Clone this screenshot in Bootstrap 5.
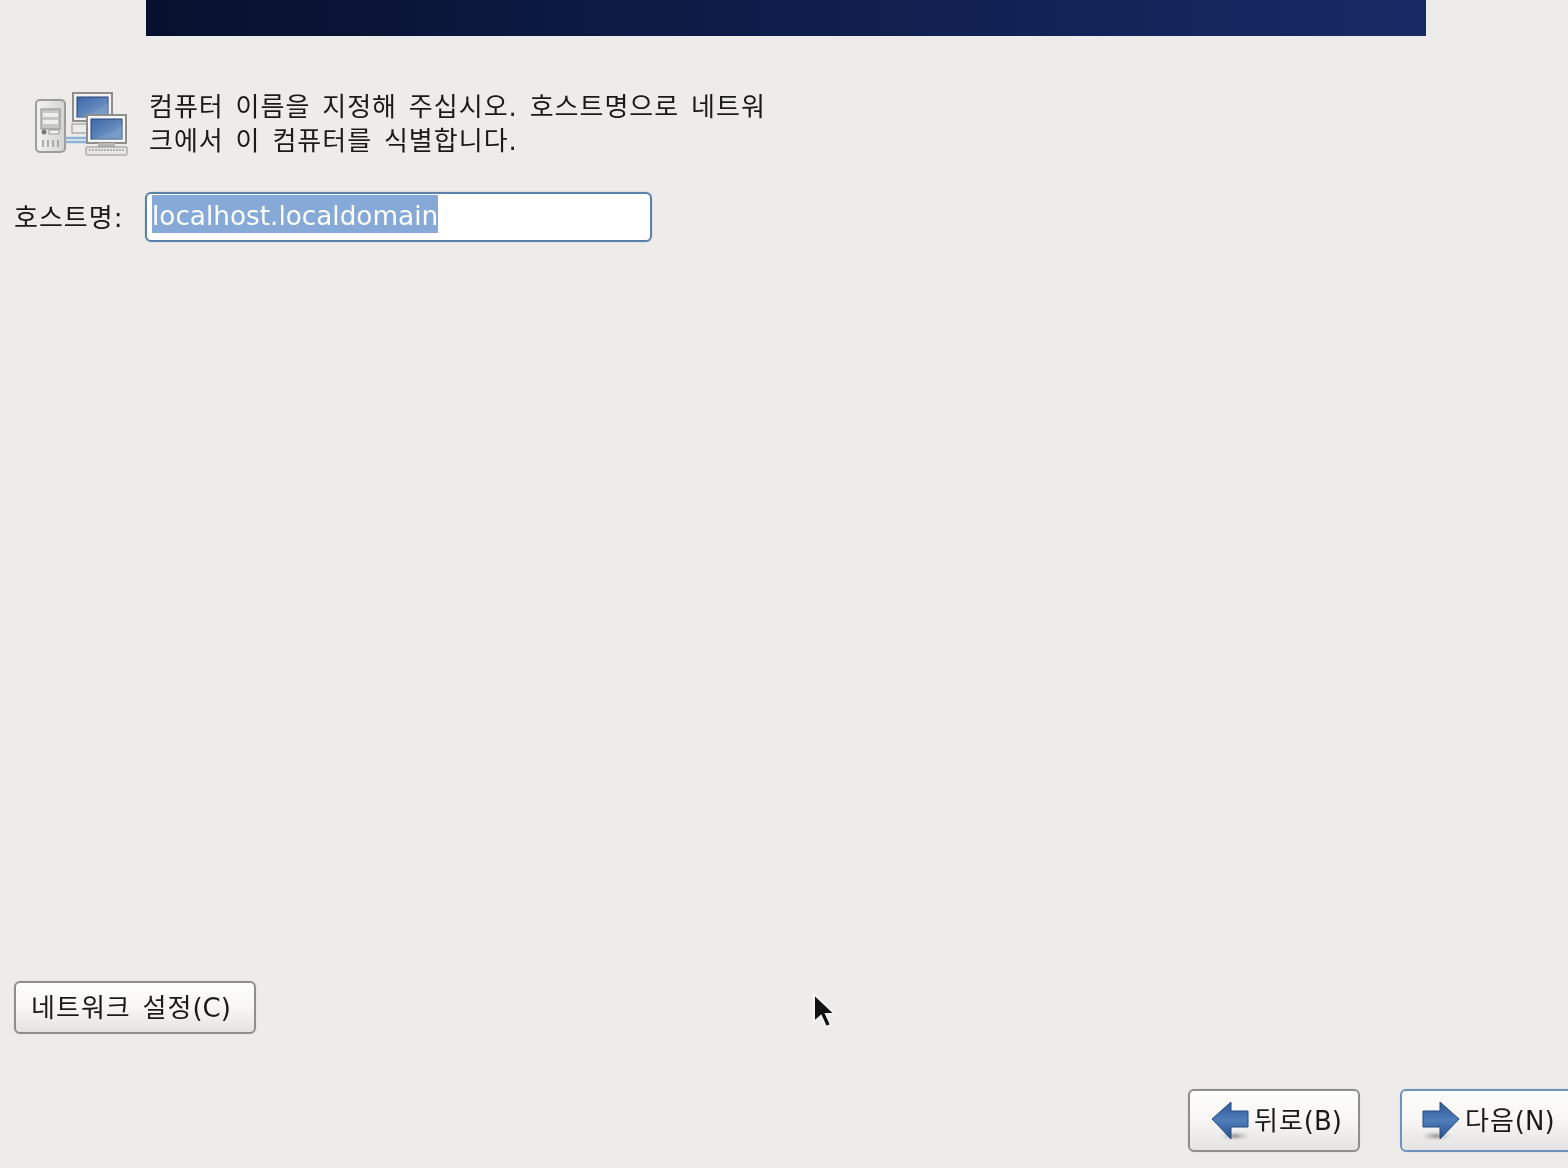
<!DOCTYPE html>
<html lang="ko">
<head>
<meta charset="utf-8">
<title>호스트명</title>
<link href="https://cdn.jsdelivr.net/npm/bootstrap@5.3.0/dist/css/bootstrap.min.css" rel="stylesheet">
<style>
html,body{height:100%;margin:0;overflow:hidden}
body{background:#edecea;color:#1a1a1a;font-family:"DejaVu Sans","Noto Sans CJK KR",sans-serif;font-size:26px;position:relative}
.shell{height:1168px;padding-bottom:16px}
.softtext{letter-spacing:1px;word-spacing:2.6px;filter:blur(.35px)}
.latin{letter-spacing:0}
.banner{height:36px;width:1280px;margin-left:146px;background:linear-gradient(90deg,#07102e 0%,#0e1c47 45%,#182a66 100%);flex:none}
.intro{margin-top:49px;padding-left:20px;height:80px}
.hosticon{width:120px;height:80px;flex:none;margin-right:9px;filter:blur(.6px)}
.introtext{line-height:34px;width:625px;margin-top:5px;word-break:break-all}
.hostrow{margin-top:27px;padding-left:14px;height:50px}
.hostlabel{width:131px;padding-top:2px}
.hostinput.form-control{width:507px;height:50px;border:2px solid #5a80ad;border-radius:6px;padding:1px 5px;background:#fff;font-size:26.3px;color:#fff;box-shadow:0 0 0 1px #e2e2e0}
.hostinput .sel{background:#86a9d8;color:#fff;display:block;width:fit-content;height:38px;line-height:42px;filter:blur(.3px)}
.gtkbtn.btn{font-size:26px;line-height:30px;color:#1a1a1a;background:linear-gradient(180deg,#fefefd 0%,#f7f6f5 50%,#e4e3e1 100%);border:2px solid #8e8e8c;border-radius:6px;box-shadow:0 0 0 1px #e6e5e3;padding:0}
.netbtn.btn{width:242px;height:53px;margin-left:14px;padding-right:8px;padding-top:1px;flex:none}
.navrow{margin-top:55px;padding-left:1188px;height:63px;gap:40px;flex:none}
.backbtn.btn,.nextbtn.btn{height:63px;display:flex;align-items:center;gap:5px;flex:none}
.backbtn.btn{width:172px;padding-left:21px}
.nextbtn.btn{width:190px;padding-left:20px;border-color:#6f92bf;margin-right:-20px}
.arrow{width:38px;height:42px;flex:none;filter:blur(.4px)}
.spacer{flex:1}
.pointer{position:absolute;left:812px;top:992px;width:26px;height:40px;filter:blur(.5px)}
</style>
</head>
<body>
<div class="shell d-flex flex-column">
  <div class="banner"></div>
  <div class="intro d-flex">
    <svg class="hosticon" viewBox="20 85 120 80" aria-hidden="true">
      <defs>
        <linearGradient id="scr" x1="0" y1="0" x2="1" y2="1"><stop offset="0" stop-color="#3c68a8"/><stop offset="1" stop-color="#7fa0cb"/></linearGradient>
        <linearGradient id="srv" x1="0" y1="0" x2="1" y2="0"><stop offset="0" stop-color="#f4f4f2"/><stop offset="1" stop-color="#d4d4d0"/></linearGradient>
      </defs>
      <rect x="36" y="100" width="29" height="52" rx="4" fill="url(#srv)" stroke="#9c9c9a" stroke-width="2"/>
      <rect x="41" y="109" width="19" height="20" fill="#c6c6c2" stroke="#8e8e8c"/>
      <rect x="43" y="113" width="15" height="4" fill="#eeeeea"/><rect x="43" y="120" width="15" height="4" fill="#eeeeea"/>
      <circle cx="44" cy="132" r="2.5" fill="#777"/><rect x="49" y="130" width="10" height="4" fill="#f2f2ee" stroke="#999"/>
      <path d="M43 140v7M48 140v7M53 140v7M58 140v7" stroke="#999" stroke-width="1.5"/>
      <path d="M65 138h21M65 142h21" stroke="#8db2dc" stroke-width="2.5"/>
      <rect x="73" y="93" width="39" height="28" fill="#f2f2f0" stroke="#8e8e8c" stroke-width="2"/>
      <rect x="77" y="97" width="31" height="20" fill="url(#scr)" stroke="#23457e"/>
      <path d="M77 117c12-2 20-6 31-14v14z" fill="#7d9fc9" opacity=".55"/>
      <rect x="72" y="124" width="16" height="9" fill="#ecece8" stroke="#8e8e8c"/>
      <rect x="87" y="115" width="39" height="28" fill="#f6f6f4" stroke="#8e8e8c" stroke-width="2"/>
      <rect x="91" y="119" width="31" height="20" fill="url(#scr)" stroke="#23457e"/>
      <path d="M91 139c12-2 20-6 31-14v14z" fill="#7d9fc9" opacity=".55"/>
      <rect x="98" y="143" width="17" height="4" fill="#b8b8b4"/>
      <rect x="86" y="147" width="41" height="8" rx="1" fill="#e8e8e4" stroke="#8e8e8c"/>
      <path d="M89 150h35" stroke="#b0b0ac" stroke-width="2" stroke-dasharray="2 1"/>
    </svg>
    <div class="introtext softtext">컴퓨터 이름을 지정해 주십시오. 호스트명으로 네트워크에서 이 컴퓨터를 식별합니다.</div>
  </div>
  <div class="hostrow d-flex align-items-center">
    <label class="hostlabel softtext" for="hn">호스트명:</label>
    <div class="hostinput form-control" id="hn"><span class="sel">localhost.localdomain</span></div>
  </div>
  <div class="spacer"></div>
  <button type="button" class="btn gtkbtn netbtn"><span class="softtext d-inline-block">네트워크 설정<span class="latin">(C)</span></span></button>
  <div class="navrow d-flex">
    <button type="button" class="btn gtkbtn backbtn">
      <svg class="arrow" viewBox="0 0 38 42" aria-hidden="true">
        <defs>
          <radialGradient id="shade"><stop offset="0" stop-color="#8f8f8d"/><stop offset="1" stop-color="#e8e8e6" stop-opacity="0"/></radialGradient>
          <linearGradient id="blu" x1="0" y1="0" x2="0" y2="1"><stop offset="0" stop-color="#2f5a98"/><stop offset=".5" stop-color="#4f7eb9"/><stop offset="1" stop-color="#24508e"/></linearGradient>
        </defs>
        <ellipse cx="24" cy="36" rx="18" ry="6" fill="url(#shade)"/>
        <path d="M1 19L20 2v9h17v16H20v12z" fill="url(#blu)" stroke="#264a82"/>
      </svg>
      <span class="softtext">뒤로<span class="latin">(B)</span></span>
    </button>
    <button type="button" class="btn gtkbtn nextbtn">
      <svg class="arrow" viewBox="0 0 38 42" aria-hidden="true">
        <ellipse cx="14" cy="36" rx="18" ry="6" fill="url(#shade)"/>
        <path d="M37 19L18 2v9H1v16h17v12z" fill="url(#blu)" stroke="#264a82"/>
      </svg>
      <span class="softtext">다음<span class="latin">(N)</span></span>
    </button>
  </div>
</div>
<svg class="pointer" viewBox="0 0 26 40" aria-hidden="true"><path d="M2 2v28l7-6 5 11 5-2-5-11h9z" fill="#111" stroke="#f4f4f4" stroke-width="2"/></svg>
<script src="https://cdn.jsdelivr.net/npm/bootstrap@5.3.0/dist/js/bootstrap.bundle.min.js"></script>
</body>
</html>
